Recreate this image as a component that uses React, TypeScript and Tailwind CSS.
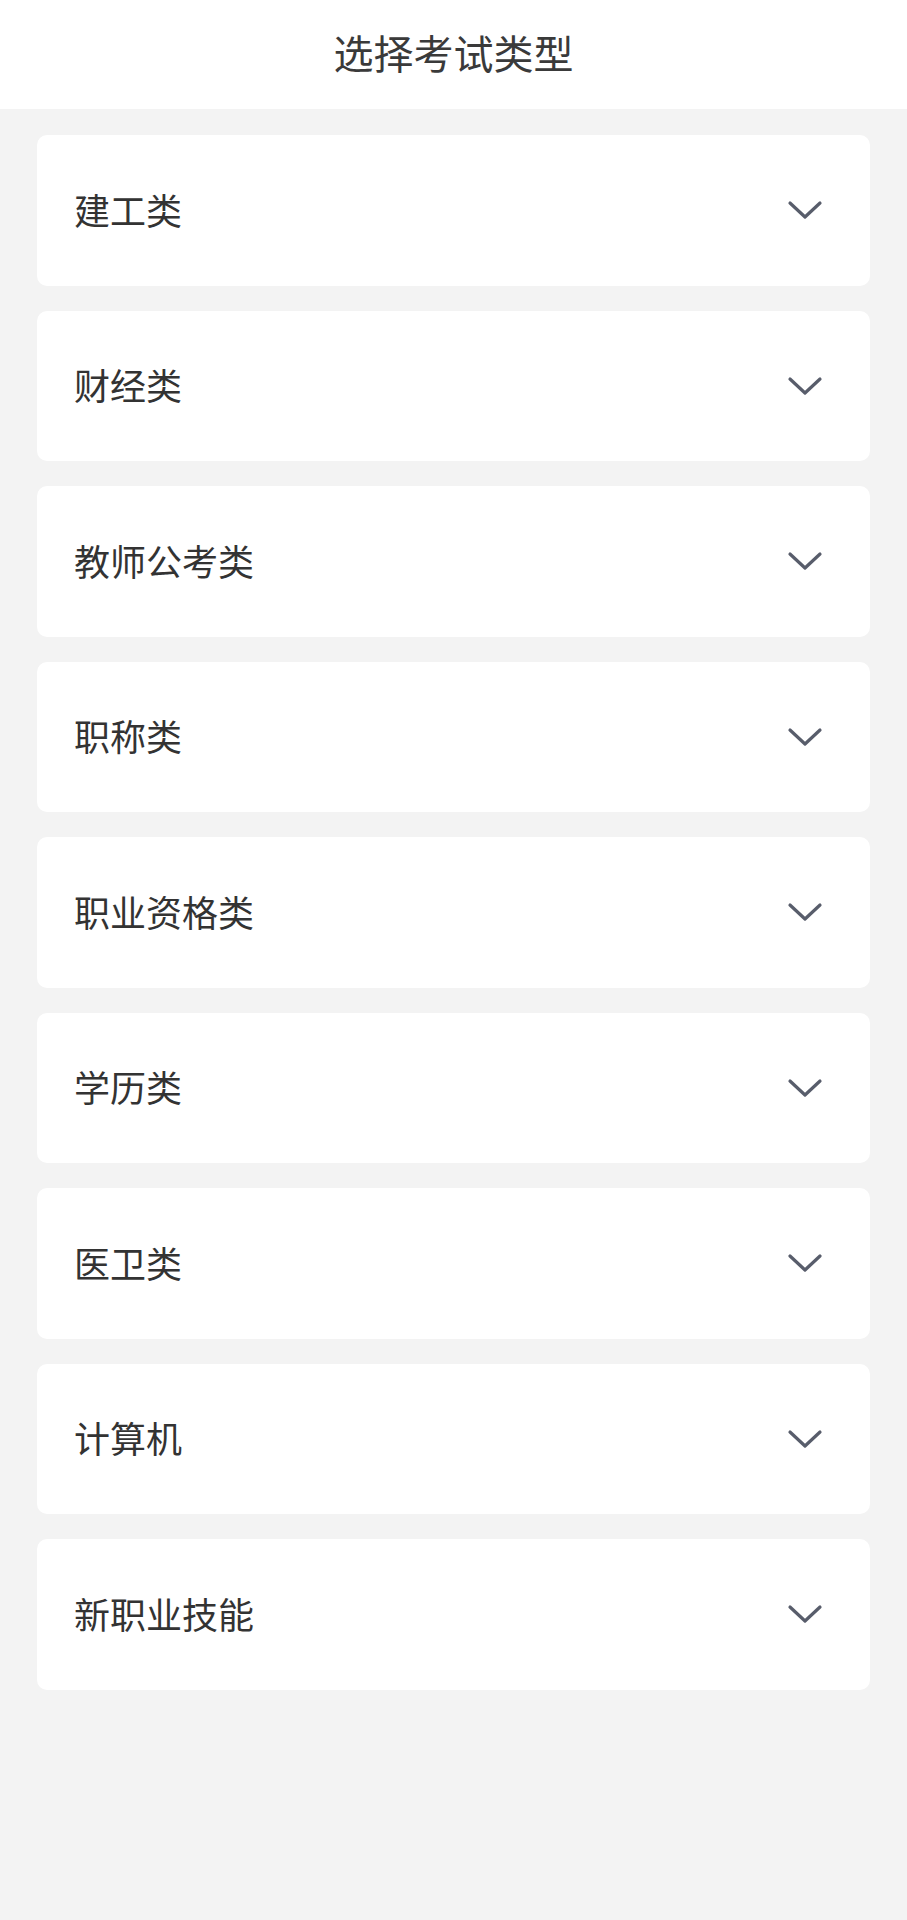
const categories = [
  "建工类",
  "财经类",
  "教师公考类",
  "职称类",
  "职业资格类",
  "学历类",
  "医卫类",
  "计算机",
  "新职业技能",
]

function Chevron() {
  return (
    <svg width="36" height="20" viewBox="0 0 36 20" fill="none" className="shrink-0">
      <polyline
        points="3,3 18,17 33,3"
        stroke="#585d6b"
        strokeWidth="3.2"
        strokeLinecap="round"
        strokeLinejoin="round"
      />
    </svg>
  )
}

export default function App() {
  return (
    <main
      className="min-h-[1920px] w-full bg-[#f3f3f3] text-[#333333]"
      style={{ fontFamily: '"Noto Sans CJK SC", "Noto Sans", sans-serif' }}
    >
      {/* Header */}
      <header className="h-[109px] bg-white flex items-center justify-center">
        <h1 className="text-[40px] leading-none text-[#3a3a3a] pb-[5px]">选择考试类型</h1>
      </header>

      {/* Category list */}
      <section className="px-[37px] pt-[26px] flex flex-col gap-[25px]">
        {categories.map((name) => (
          <div
            key={name}
            className="h-[150.5px] bg-white rounded-[10px] flex items-center justify-between pl-[37px] pr-[47px]"
          >
            <span className="text-[36px] leading-none text-[#333333] pb-[3px]">{name}</span>
            <Chevron />
          </div>
        ))}
      </section>
    </main>
  )
}
